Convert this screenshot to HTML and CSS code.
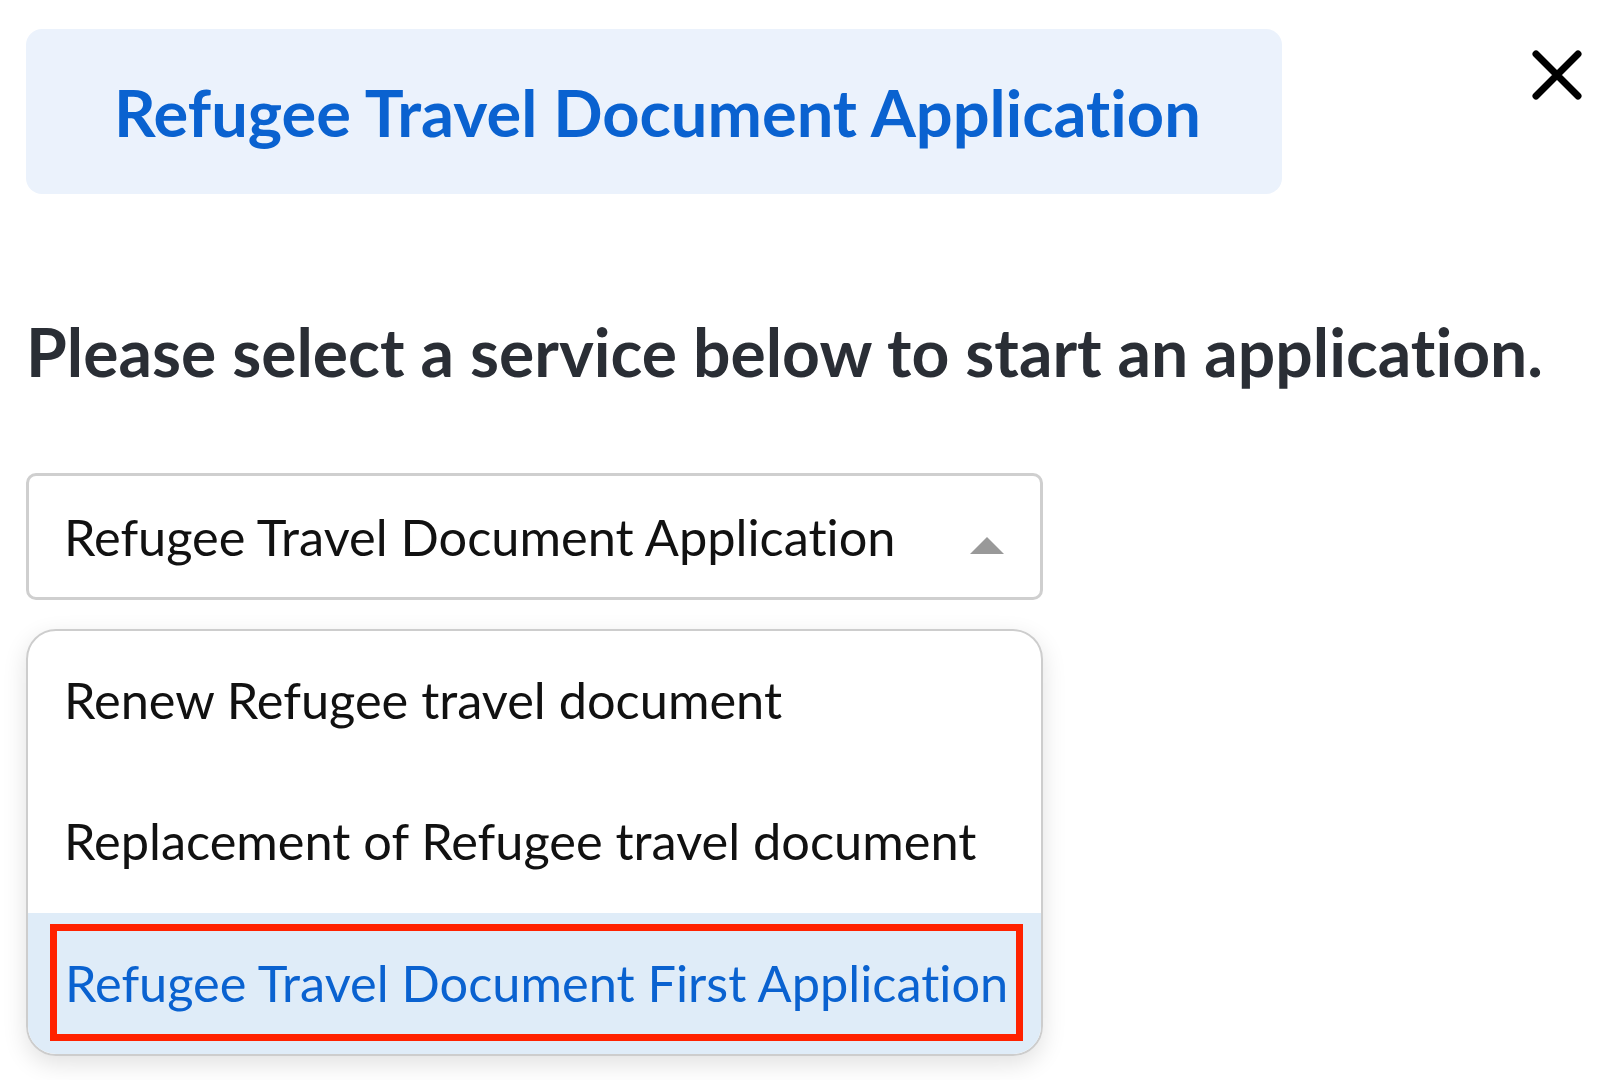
FILE: index.html
```html
<!DOCTYPE html>
<html>
<head>
<meta charset="utf-8">
<link rel="stylesheet" href="styles.css">
</head>
<body>
<div class="page">
  <div class="top">
    <div class="banner"><h1 class="banner-title">Refugee Travel Document Application</h1></div>
    <button class="close" aria-label="Close">
      <svg width="50" height="50" viewBox="0 0 50 50"><path d="M4 4 L46 46 M46 4 L4 46" stroke="#000" stroke-width="7" stroke-linecap="round" fill="none"/></svg>
    </button>
  </div>
  <h2 class="prompt">Please select a service below to start an application.</h2>
  <div class="select">
    <span class="select-value">Refugee Travel Document Application</span>
    <span class="caret"></span>
  </div>
  <ul class="menu">
    <li class="option">Renew Refugee travel document</li>
    <li class="option">Replacement of Refugee travel document</li>
    <li class="option selected"><span class="highlight">Refugee Travel Document First Application</span></li>
  </ul>
</div>
</body>
</html>
```
FILE: styles.css
```css
html, body { margin: 0; padding: 0; background: #fff; }
body { font-family: Lato, "Noto Sans", sans-serif; width: 1600px; height: 1080px; overflow: hidden; font-variant-ligatures: none; }
.page { padding: 29px 0 0 26px; }
.top { display: flex; align-items: flex-start; }
.banner {
  width: 1256px; height: 165px; box-sizing: border-box;
  background: #ebf2fc; border-radius: 16px;
  display: flex; align-items: center; padding-left: 88px;
}
.banner-title { margin: 0; font-size: 65px; font-weight: 700; color: #0a62d0; }
.close { margin: 21px 0 0 250px; padding: 0; border: 0; background: none; width: 50px; height: 50px; }
.close svg { display: block; }
.prompt { margin: 118px 0 0 0; font-size: 66px; font-weight: 700; color: #2a2e35; line-height: 80px; }
.select {
  margin-top: 81px; width: 1017px; height: 127px; box-sizing: border-box;
  border: 3px solid #cfcfcf; border-radius: 10px;
  display: flex; align-items: center; justify-content: space-between;
  padding: 0 36px 0 35px;
}
.select-value { font-size: 50.5px; color: #111; }
.caret { width: 0; height: 0; border-left: 17px solid transparent; border-right: 17px solid transparent; border-bottom: 17px solid #999; margin-top: 18px; }
.menu {
  list-style: none; margin: 29px 0 0 0; padding: 0; width: 1017px; box-sizing: border-box;
  border: 2px solid #cdcdcd; border-radius: 30px; overflow: hidden;
  box-shadow: 0 8px 24px rgba(0,0,0,0.12);
}
.option { height: 141px; display: flex; align-items: center; padding-left: 36px; padding-bottom: 4px; font-size: 50.5px; color: #111; box-sizing: border-box; }
.option.selected { background: #dfecf8; padding: 11px 18px 13px 22px; color: #0a62d0; }
.highlight { flex: 1; height: 100%; box-sizing: border-box; border: 7px solid #ff2200; display: flex; align-items: center; padding-left: 8px; }
```
